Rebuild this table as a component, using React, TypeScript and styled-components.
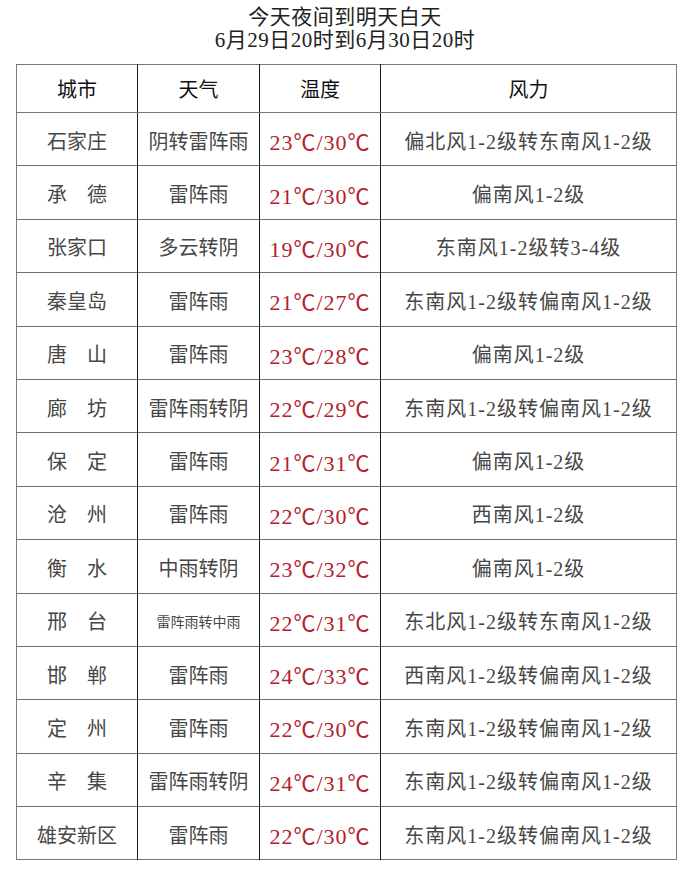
import styled, { createGlobalStyle } from 'styled-components';

const GlobalStyle = createGlobalStyle`
  html, body {
    margin: 0;
    padding: 0;
    background: #ffffff;
  }
  body {
    font-family: "Liberation Serif", "Noto Sans CJK SC", serif;
  }
`;

const Page = styled.div`
  width: 690px;
  height: 892px;
  padding-top: 6px;
  box-sizing: border-box;
  background: #fff;
`;

const Title = styled.div`
  text-align: center;
  color: #222;
  font-size: 21px;
  line-height: 23px;
  letter-spacing: 0.5px;
`;

const Table = styled.table`
  margin: 12px 0 0 16px;
  width: 660px;
  border-collapse: collapse;
  table-layout: fixed;
  border: 1px solid #7a7a7a;
`;

const HeadCell = styled.th`
  height: 47px;
  font-weight: normal;
  font-size: 20px;
  color: #111;
  border-left: 1.5px solid #1a1a1a;
  border-bottom: 1px solid #777;
  padding: 0;
  &:first-child {
    border-left: none;
  }
`;

const Cell = styled.td<{ $small?: boolean }>`
  height: 50.4px;
  padding: 2px 0 0;
  text-align: center;
  vertical-align: middle;
  font-size: ${p => (p.$small ? '14px' : '20px')};
  color: #474747;
  border-left: 1.5px solid #1a1a1a;
  border-top: 1px solid #6e6e6e;
  white-space: nowrap;
  &:first-child {
    border-left: none;
  }
`;

const Temp = styled.span`
  color: #b3212c;
  font-size: 22px;
  letter-spacing: 1px;
`;

const Wind = styled.span`
  letter-spacing: 1px;
`;

type Row = {
  city: string;
  weather: string;
  temp: string;
  wind: string;
  small?: boolean;
};

const rows: Row[] = [
  { city: '石家庄', weather: '阴转雷阵雨', temp: '23℃/30℃', wind: '偏北风1-2级转东南风1-2级' },
  { city: '承\u3000德', weather: '雷阵雨', temp: '21℃/30℃', wind: '偏南风1-2级' },
  { city: '张家口', weather: '多云转阴', temp: '19℃/30℃', wind: '东南风1-2级转3-4级' },
  { city: '秦皇岛', weather: '雷阵雨', temp: '21℃/27℃', wind: '东南风1-2级转偏南风1-2级' },
  { city: '唐\u3000山', weather: '雷阵雨', temp: '23℃/28℃', wind: '偏南风1-2级' },
  { city: '廊\u3000坊', weather: '雷阵雨转阴', temp: '22℃/29℃', wind: '东南风1-2级转偏南风1-2级' },
  { city: '保\u3000定', weather: '雷阵雨', temp: '21℃/31℃', wind: '偏南风1-2级' },
  { city: '沧\u3000州', weather: '雷阵雨', temp: '22℃/30℃', wind: '西南风1-2级' },
  { city: '衡\u3000水', weather: '中雨转阴', temp: '23℃/32℃', wind: '偏南风1-2级' },
  { city: '邢\u3000台', weather: '雷阵雨转中雨', temp: '22℃/31℃', wind: '东北风1-2级转东南风1-2级', small: true },
  { city: '邯\u3000郸', weather: '雷阵雨', temp: '24℃/33℃', wind: '西南风1-2级转偏南风1-2级' },
  { city: '定\u3000州', weather: '雷阵雨', temp: '22℃/30℃', wind: '东南风1-2级转偏南风1-2级' },
  { city: '辛\u3000集', weather: '雷阵雨转阴', temp: '24℃/31℃', wind: '东南风1-2级转偏南风1-2级' },
  { city: '雄安新区', weather: '雷阵雨', temp: '22℃/30℃', wind: '东南风1-2级转偏南风1-2级' },
];

export default function App() {
  return (
    <Page>
      <GlobalStyle />
      <Title>今天夜间到明天白天</Title>
      <Title>6月29日20时到6月30日20时</Title>
      <Table>
        <colgroup>
          <col style={{ width: 121 }} />
          <col style={{ width: 122 }} />
          <col style={{ width: 121 }} />
          <col style={{ width: 296 }} />
        </colgroup>
        <thead>
          <tr>
            <HeadCell>城市</HeadCell>
            <HeadCell>天气</HeadCell>
            <HeadCell>温度</HeadCell>
            <HeadCell>风力</HeadCell>
          </tr>
        </thead>
        <tbody>
          {rows.map(r => (
            <tr key={r.city}>
              <Cell>{r.city}</Cell>
              <Cell $small={r.small}>{r.weather}</Cell>
              <Cell>
                <Temp>{r.temp}</Temp>
              </Cell>
              <Cell>
                <Wind>{r.wind}</Wind>
              </Cell>
            </tr>
          ))}
        </tbody>
      </Table>
    </Page>
  );
}
